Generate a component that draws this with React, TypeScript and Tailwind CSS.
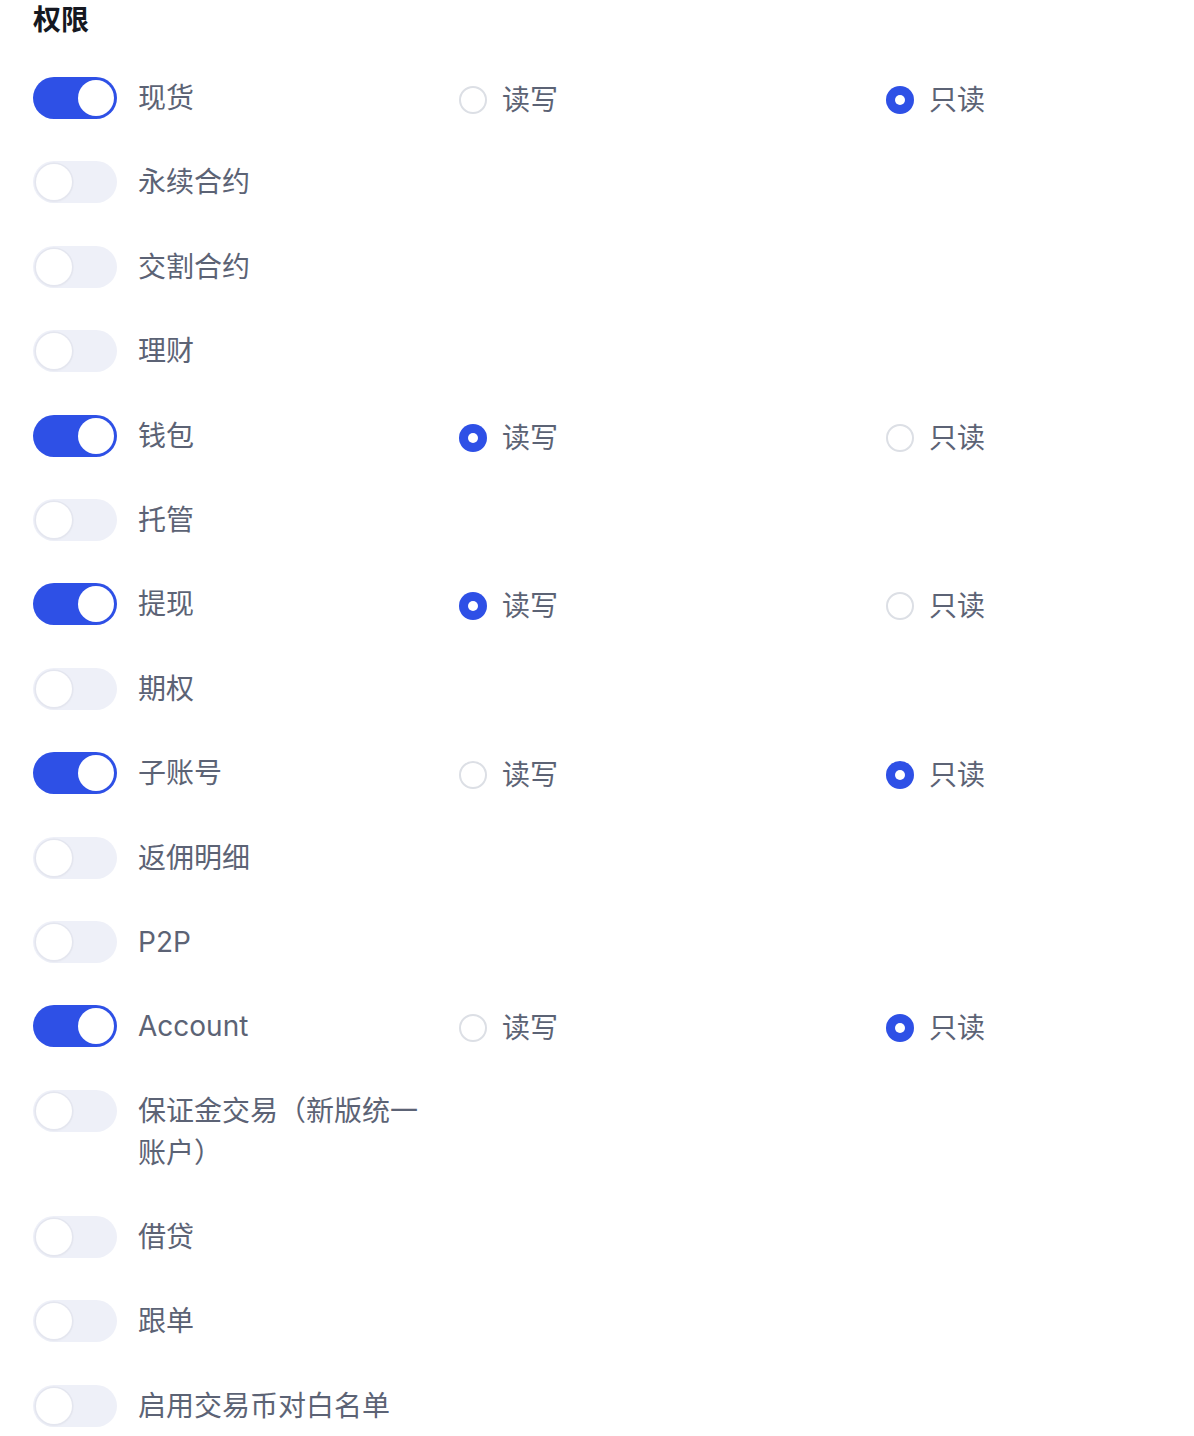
import { useState } from "react";

type Access = "rw" | "ro";

interface Perm {
  name: string;
  on: boolean;
  access?: Access;
}

const initial: Perm[] = [
  { name: "现货", on: true, access: "ro" },
  { name: "永续合约", on: false },
  { name: "交割合约", on: false },
  { name: "理财", on: false },
  { name: "钱包", on: true, access: "rw" },
  { name: "托管", on: false },
  { name: "提现", on: true, access: "rw" },
  { name: "期权", on: false },
  { name: "子账号", on: true, access: "ro" },
  { name: "返佣明细", on: false },
  { name: "P2P", on: false },
  { name: "Account", on: true, access: "ro" },
  { name: "保证金交易（新版统一账户）", on: false },
  { name: "借贷", on: false },
  { name: "跟单", on: false },
  { name: "启用交易币对白名单", on: false },
];

const Toggle = ({ on, onClick }: { on: boolean; onClick: () => void }) => (
  <button
    onClick={onClick}
    className={`relative w-[84px] h-[42px] shrink-0 rounded-full ${on ? "bg-[#2e50e6]" : "bg-[#eef0f8]"}`}
  >
    <span
      className={`absolute top-[3px] w-[36px] h-[36px] rounded-full bg-white ${
        on ? "left-[45px]" : "left-[3px] shadow-[0_0_0_1.5px_#e4e6ef,0_1px_3px_rgba(0,0,0,0.08)]"
      }`}
    />
  </button>
);

const Radio = ({ checked, label, onClick }: { checked: boolean; label: string; onClick: () => void }) => (
  <button onClick={onClick} className="flex items-center gap-[15px] h-[42px]">
    {checked ? (
      <span className="w-[28px] h-[28px] rounded-full bg-[#2e50e6] flex items-center justify-center">
        <span className="w-[10px] h-[10px] rounded-full bg-white" />
      </span>
    ) : (
      <span className="w-[28px] h-[28px] rounded-full border-2 border-[#dcdfe5] bg-white" />
    )}
    <span className="text-[28px] leading-[42px] text-[#5c6375]">{label}</span>
  </button>
);

const App = () => {
  const [perms, setPerms] = useState<Perm[]>(initial);

  const toggle = (i: number) =>
    setPerms((p) => p.map((x, j) => (j === i ? { ...x, on: !x.on, access: x.on ? undefined : "ro" } : x)));

  const setAccess = (i: number, access: Access) =>
    setPerms((p) => p.map((x, j) => (j === i ? { ...x, access } : x)));

  return (
    <div
      className="min-h-screen bg-white px-[33px]"
      style={{ fontFamily: 'Inter, "Noto Sans CJK SC", sans-serif' }}
    >
      <h1 className="text-[28px] leading-[40px] font-bold text-[#151821]">权限</h1>

      <div className="mt-[37px] flex flex-col gap-[42.4px]">
        {perms.map((p, i) => (
          <div key={p.name} className="flex items-start">
            <Toggle on={p.on} onClick={() => toggle(i)} />
            <div className="ml-[21px] w-[300px] shrink-0 text-[28px] leading-[42px] text-[#5c6375]">{p.name}</div>
            {p.on && (
              <div className="ml-[21px] flex translate-y-[2px]">
                <div className="w-[427px]">
                  <Radio checked={p.access === "rw"} label="读写" onClick={() => setAccess(i, "rw")} />
                </div>
                <Radio checked={p.access === "ro"} label="只读" onClick={() => setAccess(i, "ro")} />
              </div>
            )}
          </div>
        ))}
      </div>
    </div>
  );
};

export default App;
